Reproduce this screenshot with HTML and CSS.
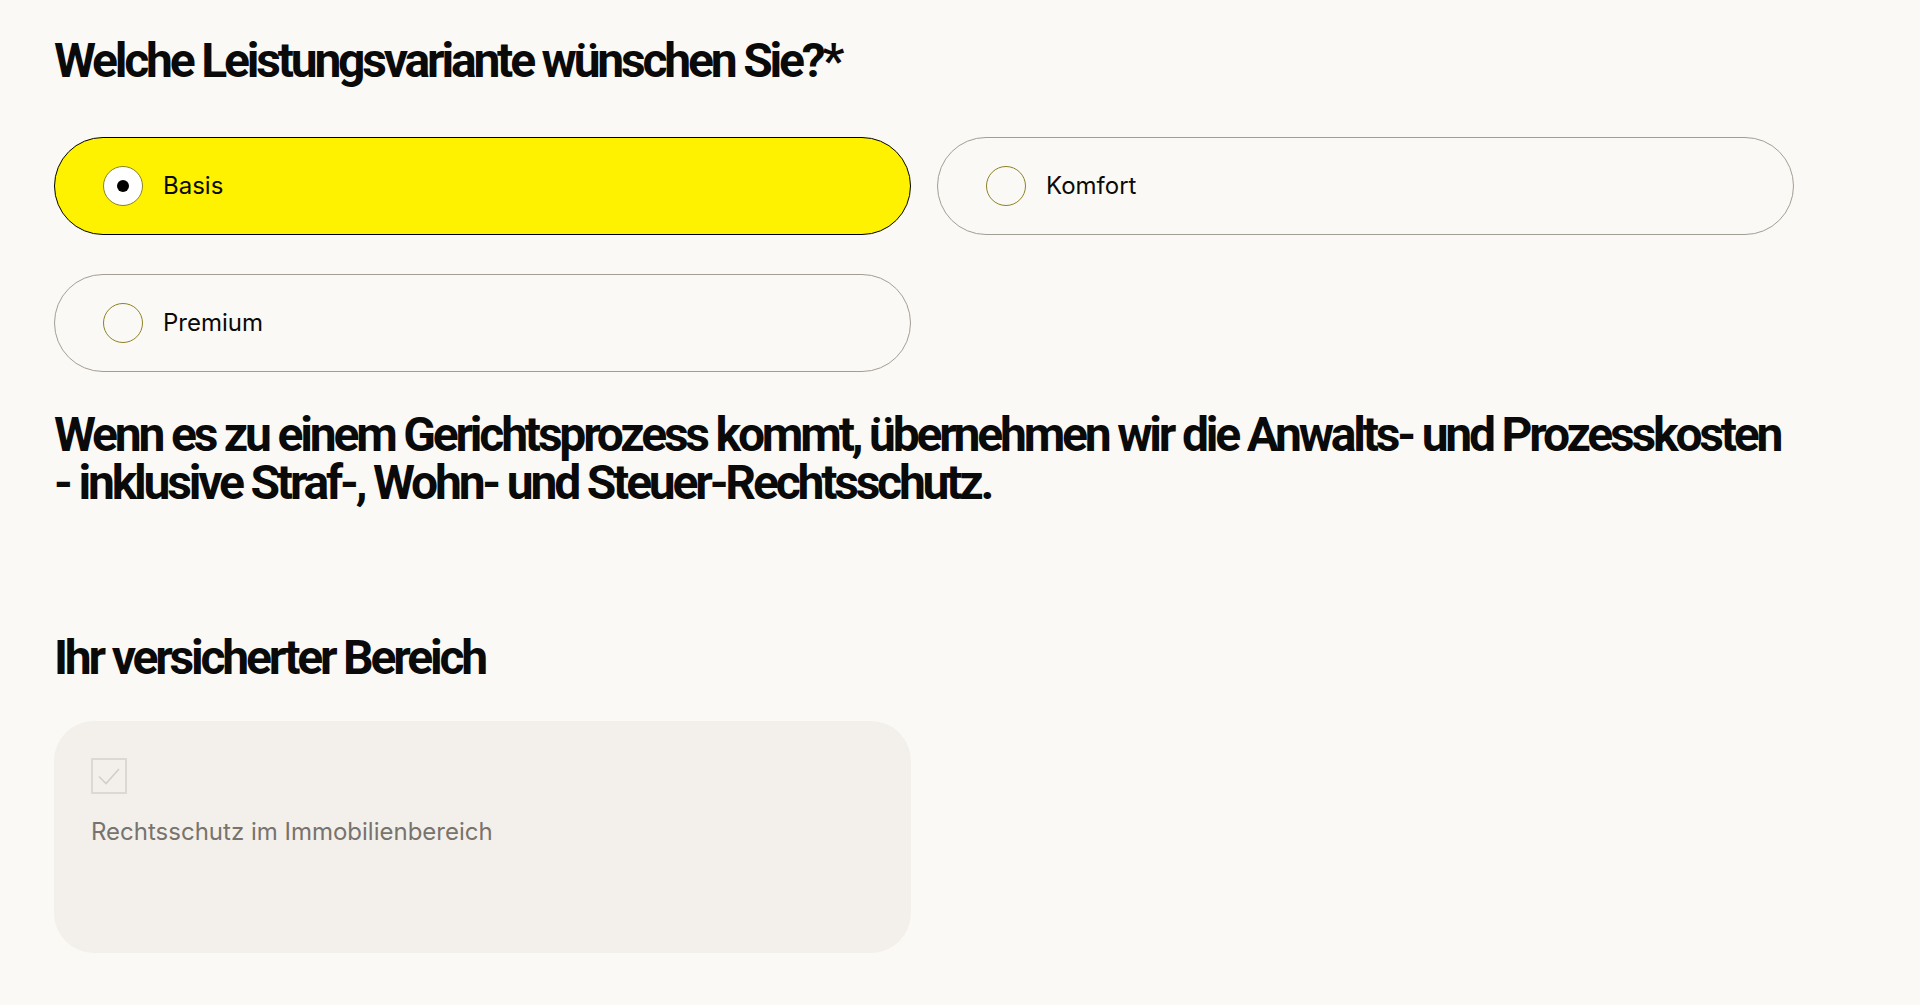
FILE: index.html
```html
<!DOCTYPE html>
<html lang="de">
<head>
    <meta charset="UTF-8">
    <meta name="viewport" content="width=device-width, initial-scale=1.0">
    <title>Rechtsschutz - Leistungsvariante</title>
    <link rel="stylesheet" href="styles.css">
</head>
<body>
    <main class="form-page">
        <!-- Leistungsvariante -->
        <section class="field">
            <h2 class="field-title">Welche Leistungsvariante wünschen Sie?*</h2>
            <div class="variant-grid">
                <label class="variant is-selected">
                    <span class="radio"></span>
                    <span class="variant-name">Basis</span>
                </label>
                <label class="variant">
                    <span class="radio"></span>
                    <span class="variant-name">Komfort</span>
                </label>
                <label class="variant">
                    <span class="radio"></span>
                    <span class="variant-name">Premium</span>
                </label>
            </div>
        </section>

        <p class="variant-desc">Wenn es zu einem Gerichtsprozess kommt, übernehmen wir die Anwalts- und Prozesskosten<br>- inklusive Straf-, Wohn- und Steuer-Rechtsschutz.</p>

        <!-- Versicherter Bereich -->
        <section class="field coverage">
            <h2 class="field-title">Ihr versicherter Bereich</h2>
            <div class="coverage-box">
                <span class="checkbox">
                    <svg viewBox="0 0 36 36" width="36" height="36">
                        <path d="M8 18.5 L15 25.5 L28 11" fill="none" stroke="#d2cec8" stroke-width="1.6"/>
                    </svg>
                </span>
                <span class="coverage-label">Rechtsschutz im Immobilienbereich</span>
            </div>
        </section>
    </main>
</body>
</html>
```

FILE: styles.css
```css
* {
    margin: 0;
    padding: 0;
    box-sizing: border-box;
}

:root {
    --page-bg: #fbf9f5;
    --text: #0a0a0a;
    --yellow: #fff200;
    --line: #a39e94;
    --radio-line: #8c8226;
    --box-bg: #f3f0eb;
    --muted: #78736d;
}

body {
    background: var(--page-bg);
    color: var(--text);
    font-family: Inter, 'Noto Sans', sans-serif;
}

.form-page {
    padding: 37px 40px 40px 54px;
}

.field-title,
.variant-desc {
    font-family: Roboto, 'Liberation Sans', sans-serif;
    font-weight: 700;
    font-size: 48px;
    line-height: 48px;
    letter-spacing: -3.2px;
}

.variant-grid {
    width: 1740px;
    display: grid;
    grid-template-columns: 1fr 1fr;
    column-gap: 26px;
    row-gap: 39px;
    margin-top: 52px;
}

.variant {
    display: flex;
    align-items: center;
    gap: 20px;
    height: 98px;
    padding-left: 48px;
    border: 1px solid var(--line);
    border-radius: 49px;
    cursor: pointer;
}

.variant.is-selected {
    background: var(--yellow);
    border: 1.5px solid #000;
}

.radio {
    width: 40px;
    height: 40px;
    border: 1.5px solid var(--radio-line);
    border-radius: 50%;
    display: flex;
    align-items: center;
    justify-content: center;
}

.variant.is-selected .radio {
    background: #fff;
}

.variant.is-selected .radio::after {
    content: '';
    width: 12px;
    height: 12px;
    border-radius: 50%;
    background: #000;
}

.variant-name {
    font-size: 24px;
    line-height: 32px;
}

.variant-desc {
    margin-top: 39px;
}

.coverage {
    margin-top: 127px;
}

.coverage-box {
    width: 857px;
    min-height: 232px;
    margin-top: 39px;
    padding: 37px;
    background: var(--box-bg);
    border-radius: 40px;
    display: flex;
    flex-direction: column;
    align-items: flex-start;
}

.checkbox {
    width: 36px;
    height: 36px;
    border: 2px solid #dcd8d2;
    display: block;
}

.checkbox svg {
    display: block;
    margin: -2px;
}

.coverage-label {
    margin-top: 22px;
    font-size: 24px;
    line-height: 32px;
    color: var(--muted);
}
```
